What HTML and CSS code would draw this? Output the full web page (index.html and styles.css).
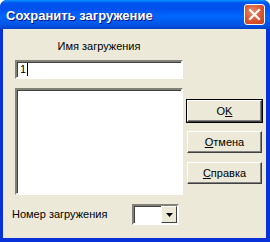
FILE: index.html
```html
<!DOCTYPE html>
<html lang="ru">
<head>
    <meta charset="UTF-8">
    <title>Сохранить загружение</title>
    <link rel="stylesheet" href="styles.css">
</head>
<body>
    <div class="window">
        <div class="titlebar">
            <span class="title">Сохранить загружение</span>
            <div class="close-btn">
                <svg width="21" height="21" viewBox="0 0 21 21">
                    <path d="M6 6 L15 15 M15 6 L6 15" stroke="#fff" stroke-width="2.2" stroke-linecap="square"/>
                </svg>
            </div>
        </div>
        <div class="client">
            <div class="main">
                <div class="left">
                    <div class="caption">Имя загружения</div>
                    <div class="edit">1<span class="caret"></span></div>
                    <div class="listbox"></div>
                </div>
                <div class="buttons">
                    <div class="btn default">O<u>K</u></div>
                    <div class="btn"><u>О</u>тмена</div>
                    <div class="btn"><u>С</u>правка</div>
                </div>
            </div>
            <div class="bottom">
                <span class="caption">Номер загружения</span>
                <div class="combo">
                    <div class="combo-field"></div>
                    <div class="combo-arrow">
                        <svg width="7" height="4" viewBox="0 0 7 4"><path d="M0 0 H7 L3.5 4 Z" fill="#000"/></svg>
                    </div>
                </div>
            </div>
        </div>
    </div>
</body>
</html>
```

FILE: styles.css
```css
html, body { margin: 0; padding: 0; background: #fff; }
body { font-family: "Liberation Sans", Tahoma, sans-serif; font-size: 11px; }

.window {
    width: 270px;
    height: 242px;
    box-sizing: border-box;
    background: #0831d9;
    border-radius: 7px 7px 0 0;
    display: flex;
    flex-direction: column;
    overflow: hidden;
}

.titlebar {
    height: 29px;
    flex: none;
    display: flex;
    align-items: center;
    justify-content: space-between;
    padding: 0 5px 0 6px;
    background: linear-gradient(#0997ff 0%, #0053ee 10%, #0050ee 30%, #0066ff 55%, #0055e6 85%, #0041c8 100%);
}
.title {
    color: #fff;
    font-weight: bold;
    font-size: 13px;
    text-shadow: 1px 1px #0f1089;
    padding-top: 1px;
}
.close-btn {
    width: 21px;
    height: 21px;
    box-sizing: border-box;
    border: 1px solid #fff;
    border-radius: 3px;
    background: radial-gradient(circle at 40% 35%, #e88a6e 0%, #d9552d 55%, #c2401c 100%);
    display: flex;
    align-items: center;
    justify-content: center;
}
.close-btn svg { margin: -1px; }

.client {
    flex: 1;
    margin: 0 4px 4px 3px;
    background: #ece9d8;
    padding: 11px 0 0 12px;
}

.main { display: flex; gap: 4px; }
.left { width: 168px; }
.caption { line-height: 13px; color: #000; }
.left .caption { text-align: center; }

.edit {
    margin-top: 7px;
    height: 19px;
    box-sizing: border-box;
    background: #fff;
    border: 2px solid;
    border-color: #828177 #fff #fff #828177;
    box-shadow: inset 1px 1px #404040;
    padding: 2px 3px;
    line-height: 13px;
    display: flex;
    align-items: center;
}
.caret { display: inline-block; width: 1px; height: 13px; background: #000; margin-left: 1px; }

.listbox {
    margin-top: 9px;
    height: 107px;
    box-sizing: border-box;
    background: #fff;
    border: 2px solid;
    border-color: #828177 #fff #fff #828177;
    box-shadow: inset 1px 1px #404040;
}

.buttons {
    padding-top: 60px;
    display: flex;
    flex-direction: column;
    gap: 9px;
}
.btn {
    width: 75px;
    height: 22px;
    box-sizing: border-box;
    border: 1px solid;
    border-color: #fff #404040 #404040 #fff;
    box-shadow: inset -1px -1px #808080;
    display: flex;
    align-items: center;
    justify-content: center;
    color: #000;
}
.btn.default { outline: 1px solid #000; }

.bottom {
    margin: 9px 0 0 -3px;
    display: flex;
    align-items: center;
}
.bottom .caption { width: 120px; }
.combo {
    width: 47px;
    height: 21px;
    box-sizing: border-box;
    border: 2px solid;
    border-color: #828177 #fff #fff #828177;
    box-shadow: inset 1px 1px #404040;
    display: flex;
    background: #fff;
}
.combo-field { flex: 1; }
.combo-arrow {
    width: 16px;
    box-sizing: border-box;
    background: #ece9d8;
    border: 1px solid;
    border-color: #fff #404040 #404040 #fff;
    display: flex;
    align-items: center;
    justify-content: center;
}
```
